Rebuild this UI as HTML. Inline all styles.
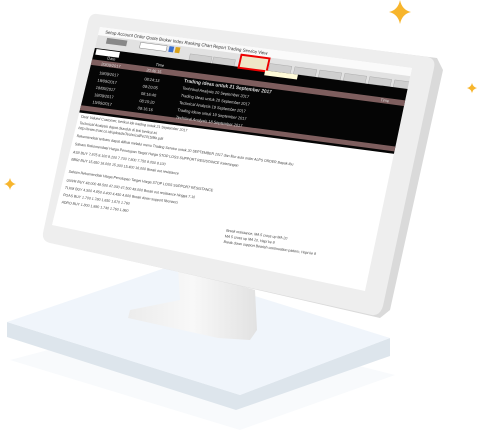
<!DOCTYPE html>
<html><head><meta charset="utf-8"><style>
html,body{margin:0;padding:0;background:#fff;width:477px;height:431px;overflow:hidden}
svg{display:block}
text{font-family:"Liberation Sans",sans-serif}
</style></head><body>
<svg width="477" height="431" viewBox="0 0 477 431" xmlns="http://www.w3.org/2000/svg">
<defs>
<linearGradient id="neck" x1="0" y1="0" x2="1" y2="0">
<stop offset="0" stop-color="#ececec"/><stop offset="0.5" stop-color="#f8f8f8"/><stop offset="1" stop-color="#e2e2e2"/></linearGradient>
<clipPath id="sc"><polygon points="100,27 412,68 365,291 52,225"/></clipPath>
</defs>
<path d="M400 0 Q402 10 411 12 Q402 14 400 24 Q398 14 389 12 Q398 10 400 0Z" fill="#f7b52c"/>
<path d="M472 83 Q473 87 477 88 Q473 89 472 93 Q471 89 467 88 Q471 87 472 83Z" fill="#f7b52c"/>
<path d="M10 178 Q11 183 16 184 Q11 185 10 190 Q9 185 4 184 Q9 183 10 178Z" fill="#f7b52c"/>
<polygon points="10,360 240,430 395,375 170,318" fill="#f8fafc"/>
<polygon points="7,322 7,337 236,410 390,356 390,338 240,395" fill="#dde5ec"/>
<polygon points="7,322 165,268 390,338 240,395" fill="#f0f5fb"/>
<polygon points="178,268 255,290 257,330 250,340 218,338 128,318 130,310 180,300" fill="url(#neck)"/>
<polygon points="96,15 437,58 443,70 390,310 380,318 48,242" fill="#dadada"/>
<path d="M97,14 L428,57 Q436,59 434,68 L383,306 Q380,316 372,315 L50,243 Q42,241 43,233 L88,22 Q90,13 97,14Z" fill="#eeeeee"/>
<polygon points="100,27 412,68 365,291 52,225" fill="#fff"/>
<g clip-path="url(#sc)">
<g transform="matrix(0.78,0.1025,-0.1846,0.8077,100,27)">
<rect x="-20" y="0" width="440" height="10" fill="#fafafa"/>
<text x="8" y="7" font-size="5.5" fill="#333">Setup   Account   Order   Quote   Broker   Index   Ranking   Chart   Report   Trading Service   View</text>
<rect x="-20" y="10" width="440" height="16" fill="#e2e2e2"/>
<rect x="12" y="12" width="26" height="7" fill="#888"/><rect x="55" y="12" width="34" height="7" fill="#fff" stroke="#777" stroke-width="0.5"/>
<rect x="92" y="12" width="6" height="7" fill="#3a6fd0"/><rect x="100" y="12" width="6" height="7" fill="#d9a21b"/>
<g fill="#cfcfcf" stroke="#999" stroke-width="0.4"><rect x="120" y="18" width="28" height="8"/><rect x="150" y="18" width="28" height="8"/><rect x="222" y="17" width="28" height="9"/><rect x="254" y="17" width="28" height="9"/><rect x="286" y="17" width="28" height="9"/><rect x="318" y="17" width="28" height="9"/><rect x="350" y="17" width="28" height="9"/><rect x="382" y="17" width="24" height="9"/></g>
<rect x="-20" y="26" width="440" height="80" fill="#050505"/>
<rect x="2" y="27" width="30" height="7" fill="#fff"/>
<rect x="-20" y="40" width="440" height="7" fill="#7e5e5e"/>
<rect x="-20" y="97" width="440" height="6" fill="#7e5e5e"/>
<rect x="184" y="11" width="36" height="16" fill="#efe7c8" stroke="#e00" stroke-width="2.4"/>
<rect x="218" y="26" width="42" height="6" fill="#fffbd8"/>
<g fill="#ddd" font-size="5">
<text x="18" y="38">Date</text><text x="80" y="38">Time</text><text x="370" y="45">Time</text>
<text x="12" y="46">20/09/2017</text><text x="70" y="46">20:46:15</text><text x="120" y="53" font-weight="bold" font-size="6">Trading ideas untuk 21 September 2017</text>
<text x="12" y="57">19/09/2017</text><text x="70" y="57">08:24:13</text><text x="120" y="62">Technical Analysis 20 September 2017</text>
<text x="12" y="66">19/09/2017</text><text x="70" y="66">08:20:05</text><text x="120" y="71">Trading ideas untuk 20 September 2017</text>
<text x="12" y="75">18/09/2017</text><text x="70" y="75">08:16:40</text><text x="120" y="80">Technical Analysis 19 September 2017</text>
<text x="12" y="84">18/09/2017</text><text x="70" y="84">08:15:20</text><text x="120" y="89">Trading ideas untuk 19 September 2017</text>
<text x="12" y="93">15/09/2017</text><text x="70" y="93">08:16:16</text><text x="120" y="98">Technical Analysis 18 September 2017</text>
</g>
<g fill="#444" font-size="4.5">
<text x="2" y="112">Dear Valued Customer, berikut ide trading untuk 21 September 2017</text>
<text x="2" y="120">Technical Analysis dapat diunduh di link berikut ini</text>
<text x="2" y="126">http://www.trust.co.id/uploads/TechnicalPe2015/file.pdf</text>
<text x="2" y="136">Rekomendasi terbaru dapat dilihat melalui menu Trading Service untuk 20 SEPTEMBER 2017 dan fitur auto order ALPS ORDER Bapak Ibu</text>
<text x="2" y="146">Saham  Rekomendasi     Harga Penutupan     Target Harga     STOP LOSS      SUPPORT       RESISTANCE        Keterangan</text>
<text x="2" y="156">ASII   BUY       7.875        8.100  8.200      7.700        7.800 7.750       8.050 8.100</text>
<text x="2" y="165">BBRI   BUY       15.650       16.000            15.300       15.400             16.000      Break out resistance</text>
<text x="2" y="180">Saham  Rekomendasi     Harga Penutupan     Target Harga     STOP LOSS      SUPPORT       RESISTANCE</text>
<text x="2" y="191">UNVR   BUY       48.000       49.500            47.000       47.500            49.000   Break out resistance hingga 7.10</text>
<text x="2" y="200">TLKM   BUY       4.500        4.650             4.400        4.450             4.600    Break down support fibonacci</text>
<text x="2" y="209">PGAS   BUY       1.700        1.780             1.650        1.670             1.760</text>
<text x="2" y="218">ADRO   BUY       1.800        1.880             1.740        1.760             1.860</text>
<text x="215" y="226">Break resistance, MA 5 cross up MA 20</text>
<text x="215" y="233">MA 5 cross up MA 20, Hapi ke 8</text>
<text x="215" y="240">Break down support Bearish continuation pattern, Hapi ke 8</text>
</g>
</g>
</g>
</svg>
</body></html>
